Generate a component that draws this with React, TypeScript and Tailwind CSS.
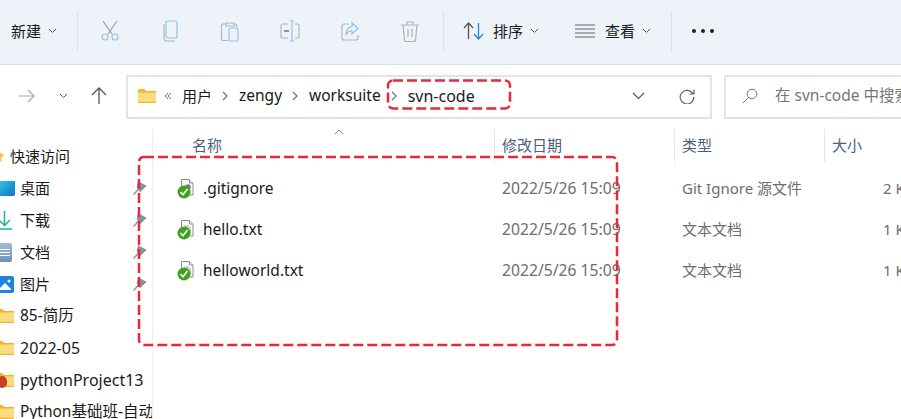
import { ReactNode } from 'react'

const font = 'font-["Noto_Sans","Noto_Sans_CJK_SC",sans-serif]'

function Chevron({ className = '' }: { className?: string }) {
  return (
    <svg width="9" height="6" viewBox="0 0 9 6" className={className} fill="none" stroke="#555" strokeWidth="1">
      <path d="M1 1l3.500 3.500L8 1" />
    </svg>
  )
}

function Crumb() {
  return (
    <svg width="6" height="10" viewBox="0 0 6 10" fill="none" stroke="#777" strokeWidth="1.300">
      <path d="M1 1l4 4-4 4" />
    </svg>
  )
}

function Folder({ className = '' }: { className?: string }) {
  return (
    <svg width="18" height="14" viewBox="0 0 18 14" className={className}>
      <path d="M0 1.500C0 .7.500 0 1.300 0h5l2 2H18v2H0z" fill="#f2b52a" />
      <path d="M0 3.500h17.200c.5 0 .8.300.8.800v8.500c0 .7-.5 1.200-1.200 1.200H1.200C.5 14 0 13.500 0 12.800z" fill="#fbdc7f" />
      <path d="M0 12.800h18v.2c0 .6-.5 1-1.200 1H1.200C.5 14 0 13.500 0 13z" fill="#eeb52e" />
    </svg>
  )
}

function Pin() {
  return (
    <svg width="14" height="14" viewBox="0 0 14 14" className="shrink-0">
      <path d="M.6 13.400L5.500 8" stroke="#8b96a3" strokeWidth="1.500" fill="none" />
      <path d="M5 .3L13.700 4.700 7 11.300 3.700 6z" fill="#87929f" />
    </svg>
  )
}

function ToolIcon({ children }: { children: ReactNode }) {
  return (
    <div className="flex w-[60px] items-center justify-center">
      <svg width="20" height="22" viewBox="0 0 20 22" fill="none" strokeWidth="1.200">
        {children}
      </svg>
    </div>
  )
}

function ToolbarDivider() {
  return <div className="h-[40px] w-px bg-[#dde2e8]" />
}

function FileIcon({ gear }: { gear?: boolean }) {
  return (
    <div className="relative h-[20px] w-[16px] shrink-0">
      <svg width="16" height="20" viewBox="0 0 16 20" className="absolute left-0 top-0">
        <path d="M3.500 .5h8l3.500 3.500v12h-11.500z" fill="#fff" stroke="#8c8c8c" />
        <path d="M11.500 .5v3.500h3.500" fill="#eee" stroke="#8c8c8c" />
        {gear ? (
          <circle cx="10" cy="8" r="2.800" fill="#777" />
        ) : (
          <path d="M6 6h5M6 8h7M6 10h7M6 12h7" stroke="#a0a0a0" />
        )}
      </svg>
      <svg width="14" height="14" viewBox="0 0 14 14" className="absolute -left-px top-[6px]">
        <circle cx="7" cy="7" r="6.500" fill="#3aa41f" />
        <path d="M3.500 7l2.500 2.800L10.500 4" stroke="#fff" strokeWidth="1.600" fill="none" />
      </svg>
    </div>
  )
}

function SideRow({ icon, label, pinned, indent = true, size = 'text-[15px]' }: { icon: ReactNode; label: string; pinned?: boolean; indent?: boolean; size?: string }) {
  return (
    <div className={`relative flex h-[32px] items-center whitespace-nowrap ${indent ? 'pl-[20px]' : 'pl-[10px]'}`}>
      <div className="absolute left-0 top-0 flex h-full items-center">{icon}</div>
      <span className={`flex-1 overflow-hidden text-[#1a1a1a] ${size}`}>{label}</span>
      {pinned && (
        <div className="absolute left-[133px] top-[9px]">
          <Pin />
        </div>
      )}
    </div>
  )
}

const files = [
  { name: '.gitignore', type: 'Git Ignore 源文件', size: '2 KB', gear: true },
  { name: 'hello.txt', type: '文本文档', size: '1 KB' },
  { name: 'helloworld.txt', type: '文本文档', size: '1 KB' },
]

export default function App() {
  return (
    <div className={`relative h-[419px] w-[901px] overflow-hidden bg-white ${font}`}>
      {/* Toolbar */}
      <div className="flex h-[65px] items-center border-b border-[#d9dfe6] bg-[#eef3f9] pb-[2px]">
        <div className="flex w-[77px] items-center pl-[11px]">
          <span className="text-[15px] text-[#1a1a1a]">新建</span>
          <Chevron className="ml-[7px]" />
        </div>
        <ToolbarDivider />
        <div className="ml-[2px] flex">
          <ToolIcon>
            <path d="M3 1l9 13M17 1L8 14" stroke="#9a9a9a" />
            <circle cx="5" cy="17" r="3" stroke="#8cc4ee" />
            <circle cx="15" cy="17" r="3" stroke="#8cc4ee" />
          </ToolIcon>
          <ToolIcon>
            <rect x="6" y="1" width="11" height="17" rx="2" stroke="#8cc4ee" />
            <path d="M4 4v14c0 2 1 3 3 3h8" stroke="#b5b5b5" />
          </ToolIcon>
          <ToolIcon>
            <path d="M6 4H3c-1 0-1.500.5-1.500 1.500V19c0 1 .5 1.500 1.500 1.500h5M14 4h1c1 0 1.500.5 1.500 1.500V7M6 3h8v3H6z" stroke="#b5b5b5" />
            <rect x="9" y="8" width="9" height="13" rx="1.500" stroke="#8cc4ee" />
          </ToolIcon>
          <ToolIcon>
            <path d="M8 4H3c-1 0-2 1-2 2v10c0 1 1 2 2 2h5M15 4h2c1 0 2 1 2 2v10c0 1-1 2-2 2h-2" stroke="#b5b5b5" />
            <path d="M12 1v20M10 1h4M10 21h4" stroke="#8cc4ee" />
            <path d="M4 11h5" stroke="#777" strokeWidth="1.600" />
          </ToolIcon>
          <ToolIcon>
            <path d="M9 4H4C2.500 4 2 5 2 6v12c0 1 .5 2 2 2h12c1 0 2-1 2-2v-3" stroke="#b5b5b5" />
            <path d="M12 3l6 5.500-6 5.500v-3c-3 0-5 1-6 4 0-5 2-8 6-8.500z" stroke="#8cc4ee" />
          </ToolIcon>
          <ToolIcon>
            <path d="M1 5h18M7 5V2h6v3M3 5l1.500 15c0 1 .5 1.500 1.500 1.500h8c1 0 1.500-.5 1.500-1.500L17 5M8 9v8M12 9v8" stroke="#b0b0b0" />
          </ToolIcon>
        </div>
        <div className="ml-[3px]">
          <ToolbarDivider />
        </div>
        <div className="ml-[19px] flex items-center">
          <svg width="21" height="18" viewBox="0 0 21 18" fill="none" strokeWidth="1.300">
            <path d="M5.500 17V1M1 6l4.500-5L10 6" stroke="#555" />
            <path d="M15.500 1v16M11 12l4.500 5 4.500-5" stroke="#1e88d8" />
          </svg>
          <span className="ml-[9px] text-[15px] text-[#1a1a1a]">排序</span>
          <Chevron className="ml-[7px]" />
        </div>
        <div className="ml-[36px] flex items-center">
          <svg width="20" height="14" viewBox="0 0 20 14" stroke="#666" strokeWidth="1.200">
            <path d="M0 1h20M0 5h20M0 9h20M0 13h20" />
          </svg>
          <span className="ml-[10px] text-[15px] text-[#1a1a1a]">查看</span>
          <Chevron className="ml-[7px]" />
        </div>
        <div className="ml-[20px]">
          <ToolbarDivider />
        </div>
        <div className="ml-[20px] flex gap-[5px]">
          <div className="h-[4px] w-[4px] rounded-full bg-[#222]" />
          <div className="h-[4px] w-[4px] rounded-full bg-[#222]" />
          <div className="h-[4px] w-[4px] rounded-full bg-[#222]" />
        </div>
      </div>

      {/* Address row */}
      <div className="flex h-[64px] items-start pt-[10px]">
        <div className="flex h-[44px] w-[126px] items-center pb-[2px]">
          <svg width="18" height="14" viewBox="0 0 18 14" fill="none" stroke="#a8a8a8" strokeWidth="1.200" className="ml-[18px]">
            <path d="M1 7h15M10 1l6 6-6 6" />
          </svg>
          <Chevron className="ml-[23px]" />
          <svg width="16" height="18" viewBox="0 0 16 18" fill="none" stroke="#555" strokeWidth="1.300" className="ml-[23px]">
            <path d="M8 17V1M1 8l7-7 7 7" />
          </svg>
        </div>
        <div className="flex h-[44px] w-[586px] items-center border-2 border-[#e3e3e3] pb-[2px] pl-[10px] pr-[15px]">
          <Folder />
          <svg width="8" height="8" viewBox="0 0 8 8" fill="none" stroke="#777" className="ml-[8px]">
            <path d="M4 1L1 4l3 3M7 1L4 4l3 3" />
          </svg>
          <span className="ml-[10px] text-[15px] text-[#1a1a1a]">用户</span>
          <div className="ml-[10px]"><Crumb /></div>
          <span className="ml-[11px] text-[15.500px] text-[#1a1a1a]">zengy</span>
          <div className="ml-[10px]"><Crumb /></div>
          <span className="ml-[11px] text-[15.500px] text-[#1a1a1a]">worksuite</span>
          <div className="ml-[10px]"><Crumb /></div>
          <span className="ml-[11px] text-[16px] text-[#1a1a1a]">svn-code</span>
          <svg width="13" height="8" viewBox="0 0 13 8" fill="none" stroke="#555" strokeWidth="1.200" className="ml-auto">
            <path d="M1 1l5.500 5.500L12 1" />
          </svg>
          <svg width="16" height="16" viewBox="0 0 16 16" fill="none" stroke="#666" strokeWidth="1.200" className="ml-[34px]">
            <path d="M14 6a6.800 6.800 0 1 0 .8 3M15 1.500V6h-4.500" />
          </svg>
        </div>
        <div className="ml-[12px] flex h-[44px] flex-1 items-center overflow-hidden whitespace-nowrap border-2 border-r-0 border-[#e3e3e3] pb-[2px] pl-[16px]">
          <svg width="16" height="16" viewBox="0 0 16 16" fill="none" stroke="#7a7a7a" className="shrink-0">
            <circle cx="10" cy="6" r="4.800" />
            <path d="M6.500 9.500L1 15" />
          </svg>
          <span className="ml-[17px] text-[15.500px] text-[#777]">在 svn-code 中搜索</span>
        </div>
      </div>

      {/* Body */}
      <div className="flex">
        <div className="h-[290px] w-[153px] shrink-0 overflow-hidden border-r border-[#eeeeee] pt-[11px]">
          <SideRow
            indent={false}
            label="快速访问"
            icon={
              <svg width="4" height="12" viewBox="0 0 4 12">
                <path d="M-4 0L4 5 1 8 2 12-4 9z" fill="#f6c343" />
              </svg>
            }
          />
          <SideRow
            pinned
            label="桌面"
            icon={<div className="h-[15px] w-[15px] rounded-br-[2px] bg-gradient-to-br from-[#35c3ec] to-[#0f6fc0]" />}
          />
          <SideRow
            pinned
            label="下载"
            icon={
              <svg width="12" height="19" viewBox="0 0 12 19" fill="none" stroke="#1db39a" strokeWidth="1.500">
                <path d="M4.500 0v14M-1 9l5.500 5.500L10 9M-1 18h13" />
              </svg>
            }
          />
          <SideRow
            pinned
            label="文档"
            icon={
              <div className="flex h-[19px] w-[12px] flex-col justify-center gap-[2px] rounded-r-[2px] bg-gradient-to-b from-[#a8bdd6] to-[#6e8fb5] pr-[2px]">
                <div className="h-px bg-white" />
                <div className="h-px bg-white" />
                <div className="h-px bg-white" />
              </div>
            }
          />
          <SideRow
            pinned
            label="图片"
            icon={
              <svg width="14" height="17" viewBox="0 0 14 17">
                <path d="M0 0h12c1 0 2 1 2 2v13c0 1-1 2-2 2H0z" fill="#1c84dc" />
                <path d="M0 12l5-5 6 6v1H0z" fill="#fff" />
                <circle cx="9" cy="5" r="1.500" fill="#fff" />
              </svg>
            }
          />
          <SideRow size="text-[15.500px]" label="85-简历" icon={<Folder className="-ml-[4px]" />} />
          <SideRow size="text-[16px]" label="2022-05" icon={<Folder className="-ml-[4px]" />} />
          <SideRow
            size="text-[16px]"
            label="pythonProject13"
            icon={
              <div className="relative">
                <Folder className="-ml-[4px]" />
                <div className="absolute left-[-3px] top-[3px] h-[12px] w-[10px] rounded-full bg-[#c8401e]" />
              </div>
            }
          />
          <SideRow size="text-[15.500px]" label="Python基础班-自动" icon={<Folder className="-ml-[4px]" />} />
        </div>

        <div className="min-w-0 flex-1">
          <div className="flex h-[33px] items-center text-[15px] text-[#4c607a]">
            <div className="relative flex h-full w-[341px] shrink-0 items-center pl-[39px]">
              名称
              <svg width="10" height="6" viewBox="0 0 10 6" fill="none" stroke="#888" className="absolute left-[181px] top-0">
                <path d="M1 5l4-4 4 4" />
              </svg>
            </div>
            <div className="flex h-full w-[180px] shrink-0 items-center border-l border-[#e5e5e5] pl-[7px]">修改日期</div>
            <div className="flex h-full w-[150px] shrink-0 items-center border-l border-[#e5e5e5] pl-[7px]">类型</div>
            <div className="flex h-full flex-1 items-center border-l border-[#e5e5e5] pl-[7px]">大小</div>
          </div>
          <div className="pt-[6px]">
            {files.map((f) => (
              <div key={f.name} className="flex h-[41px] items-center whitespace-nowrap text-[15px] text-[#6d6d6d]">
                <div className="flex w-[341px] shrink-0 items-center pl-[25px]">
                  <FileIcon gear={f.gear} />
                  <span className="ml-[9px] text-[15.500px] text-[#1a1a1a]">{f.name}</span>
                </div>
                <div className="w-[180px] shrink-0 pl-[8px] text-[15.700px]">2022/5/26 15:09</div>
                <div className="w-[150px] shrink-0 pl-[8px]">{f.type}</div>
                <div className="min-w-0 flex-1 pl-[59px]">{f.size}</div>
              </div>
            ))}
          </div>
        </div>
      </div>

      {/* Red annotation boxes drawn over the window */}
      <svg width="901" height="419" className="pointer-events-none absolute left-0 top-0" fill="none" stroke="#e9283c" strokeWidth="2.500" strokeDasharray="10 4">
        <rect x="139" y="157" width="478" height="188" rx="5" />
        <rect x="388" y="80.500" width="122" height="28" rx="5" />
      </svg>
    </div>
  )
}
